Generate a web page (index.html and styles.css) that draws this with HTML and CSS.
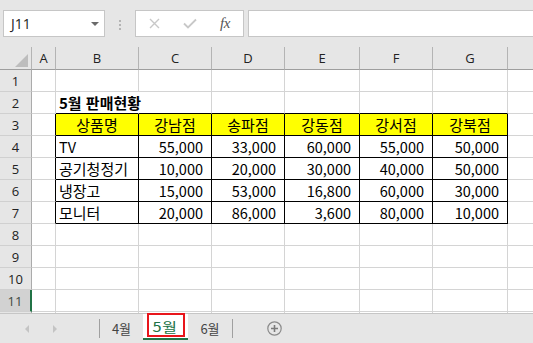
FILE: index.html
```html
<!DOCTYPE html>
<html lang="ko">
<head>
<meta charset="utf-8">
<title>5월 판매현황</title>
<link rel="stylesheet" href="styles.css">
</head>
<body>
<div class="toolbar">
  <div class="namebox"><span>J11</span><span class="caret"></span></div>
  <div class="dots"><i></i><i></i><i></i></div>
  <div class="fxbtns">
    <span class="slot"><svg width="11" height="11" viewBox="0 0 11 11"><path d="M1 1L10 10M10 1L1 10" stroke="#c8c8c8" stroke-width="1.4" fill="none"/></svg></span>
    <span class="slot"><svg width="14" height="11" viewBox="0 0 14 11"><path d="M1 5.5L5 9.5L13 1.5" stroke="#c8c8c8" stroke-width="1.8" fill="none"/></svg></span>
    <span class="slot fx">fx</span>
  </div>
  <div class="formula"></div>
</div>

<div class="sheet">
  <div class="row hdr"><div class="corner"><i></i></div><div>A</div><div>B</div><div>C</div><div>D</div><div>E</div><div>F</div><div>G</div><div></div></div>
  <div class="row"><div class="rh">1</div><div></div><div></div><div></div><div></div><div></div><div></div><div></div><div></div></div>
  <div class="row"><div class="rh">2</div><div></div><div class="bt l title">5월 판매현황</div><div class="bt"></div><div class="bt"></div><div class="bt"></div><div class="bt"></div><div class="bt"></div><div></div></div>
  <div class="row"><div class="rh">3</div><div class="bl"></div><div class="t y ctr k">상품명</div><div class="t y ctr k">강남점</div><div class="t y ctr k">송파점</div><div class="t y ctr k">강동점</div><div class="t y ctr k">강서점</div><div class="t y ctr k">강북점</div><div></div></div>
  <div class="row"><div class="rh">4</div><div class="bl"></div><div class="t l">TV</div><div class="t r">55,000</div><div class="t r">33,000</div><div class="t r">60,000</div><div class="t r">55,000</div><div class="t r">50,000</div><div></div></div>
  <div class="row"><div class="rh">5</div><div class="bl"></div><div class="t l k">공기청정기</div><div class="t r">10,000</div><div class="t r">20,000</div><div class="t r">30,000</div><div class="t r">40,000</div><div class="t r">50,000</div><div></div></div>
  <div class="row"><div class="rh">6</div><div class="bl"></div><div class="t l k">냉장고</div><div class="t r">15,000</div><div class="t r">53,000</div><div class="t r">16,800</div><div class="t r">60,000</div><div class="t r">30,000</div><div></div></div>
  <div class="row"><div class="rh">7</div><div class="bl"></div><div class="t l k">모니터</div><div class="t r">20,000</div><div class="t r">86,000</div><div class="t r">3,600</div><div class="t r">80,000</div><div class="t r">10,000</div><div></div></div>
  <div class="row"><div class="rh">8</div><div></div><div></div><div></div><div></div><div></div><div></div><div></div><div></div></div>
  <div class="row"><div class="rh">9</div><div></div><div></div><div></div><div></div><div></div><div></div><div></div><div></div></div>
  <div class="row"><div class="rh">10</div><div></div><div></div><div></div><div></div><div></div><div></div><div></div><div></div></div>
  <div class="row"><div class="rh sel">11</div><div></div><div></div><div></div><div></div><div></div><div></div><div></div><div></div></div>
  <div class="row"><div class="rh">12</div><div></div><div></div><div></div><div></div><div></div><div></div><div></div><div></div></div>
</div>

<div class="tabs">
  <span class="arrow left"></span>
  <span class="arrow right"></span>
  <span class="sep first"></span>
  <span class="tab t4">4월</span>
  <span class="tab active"><span class="lbl">5월</span><span class="mark"></span></span>
  <span class="tab t6">6월</span>
  <span class="sep"></span>
  <span class="plus"><svg width="15" height="15" viewBox="0 0 15 15"><circle cx="7.5" cy="7.5" r="6.7" stroke="#8a8a8a" stroke-width="1.2" fill="none"/><path d="M7.5 4V11M4 7.5H11" stroke="#7a7a7a" stroke-width="1.6"/></svg></span>
</div>
</body>
</html>
```

FILE: styles.css
```css
* {
  box-sizing: border-box;
  margin: 0;
  padding: 0;
}

body {
  width: 533px;
  height: 343px;
  overflow: hidden;
  background: #e6e6e6;
  font-family: "Noto Sans CJK KR", sans-serif;
  color: #000;
}

/* ---------- formula bar ---------- */
.toolbar {
  display: flex;
  align-items: flex-start;
  height: 47px;
  padding-top: 10px;
}

.namebox {
  margin-left: 3px;
  width: 102px;
  height: 27px;
  background: #fff;
  border: 1px solid #c6c6c6;
  display: flex;
  align-items: center;
  justify-content: space-between;
  padding: 0 5px 0 7px;
  font: 14px "Open Sans", sans-serif;
  color: #222;
}

.caret {
  width: 0;
  height: 0;
  border-left: 4px solid transparent;
  border-right: 4px solid transparent;
  border-top: 4px solid #6a6a6a;
}

.dots {
  width: 30px;
  height: 27px;
  display: flex;
  flex-direction: column;
  align-items: center;
  justify-content: center;
  gap: 2px;
  padding-top: 2px;
}

.dots i {
  width: 2px;
  height: 2px;
  background: #b4b4b4;
}

.fxbtns {
  width: 109px;
  height: 27px;
  background: #fff;
  border: 1px solid #c6c6c6;
  display: flex;
  align-items: center;
}

.slot {
  width: 36px;
  display: flex;
  justify-content: center;
  align-items: center;
}

.slot:nth-child(2) {
  width: 35px;
}

.fx {
  font: italic 15px "Liberation Serif", serif;
  color: #555;
  letter-spacing: -0.5px;
  padding-bottom: 1px;
}

.formula {
  flex: 1;
  height: 27px;
  margin-left: 4px;
  background: #fff;
  border: 1px solid #c6c6c6;
  border-right: none;
}

/* ---------- grid ---------- */
.sheet {
  height: 266px;
  overflow: hidden;
  background: #fff;
}

.row {
  display: grid;
  grid-template-columns: 32px 24px 83px 73px 73px 75px 73px 75px 26px;
  height: 22px;
}

.row > div {
  border-right: 1px solid #d4d4d4;
  border-bottom: 1px solid #d4d4d4;
  display: flex;
  align-items: center;
  white-space: nowrap;
  font-size: 14.5px;
}

.row > .k {
  font-size: 15px;
}

.row.hdr {
  height: 23px;
  background: #e6e6e6;
}

.row.hdr > div {
  border-right-color: #b4b4b4;
  border-bottom-color: #9e9e9e;
  justify-content: center;
  font: 13px "Open Sans", sans-serif;
  color: #222;
}

.corner {
  position: relative;
}

.corner i {
  position: absolute;
  right: 3px;
  bottom: 2px;
  width: 0;
  height: 0;
  border-left: 13px solid transparent;
  border-bottom: 13px solid #bdbdbd;
}

.row > .rh {
  background: #e6e6e6;
  justify-content: center;
  font: 13px "Open Sans", sans-serif;
  color: #222;
  border-right-color: #ababab;
  border-bottom-color: #d0d0d0;
}

.row > .rh.sel {
  background: #d2d2d2;
  border-right: 2px solid #217346;
  color: #3e4a42;
}

.l {
  padding-left: 3px;
}

.r {
  justify-content: flex-end;
  padding-right: 8px;
}

.row > .ctr {
  justify-content: center;
}

.row > .y {
  background: #ffff00;
}

.row > .title {
  font-size: 15px;
  font-weight: bold;
  border-right-color: transparent;
}

.row > .bt {
  border-bottom-color: #000;
}

.row > .bl {
  border-right-color: #000;
}

.row > .t {
  border-right-color: #000;
  border-bottom-color: #000;
}

/* ---------- sheet tabs ---------- */
.tabs {
  height: 30px;
  border-top: 1px solid #c6c6c6;
  display: flex;
  align-items: center;
  font-size: 13px;
  color: #444;
}

.arrow {
  width: 0;
  height: 0;
  border-top: 4px solid transparent;
  border-bottom: 4px solid transparent;
}

.arrow.left {
  margin-left: 25px;
  border-right: 4px solid #c4c4c4;
}

.arrow.right {
  margin-left: 24px;
  border-left: 4px solid #c4c4c4;
}

.sep {
  width: 1px;
  height: 19px;
  background: #a0a0a0;
}

.sep.first {
  margin-left: 42px;
}

.tab {
  display: flex;
  justify-content: center;
  align-items: center;
  height: 29px;
}

.t4 {
  width: 43px;
}

.t6 {
  width: 44px;
}

.tab.active {
  position: relative;
  width: 45px;
  height: 26px;
  align-self: flex-start;
  background: #fff;
  border-bottom: 2px solid #217346;
  color: #217346;
  padding-top: 1px;
}

.lbl {
  display: inline-block;
  transform: scaleX(1.25);
  letter-spacing: 0.5px;
}

.mark {
  position: absolute;
  left: 4px;
  top: -1px;
  width: 38px;
  height: 24px;
  border: 2px solid #e8151b;
}

.plus {
  display: flex;
  margin-left: 34px;
}
```
